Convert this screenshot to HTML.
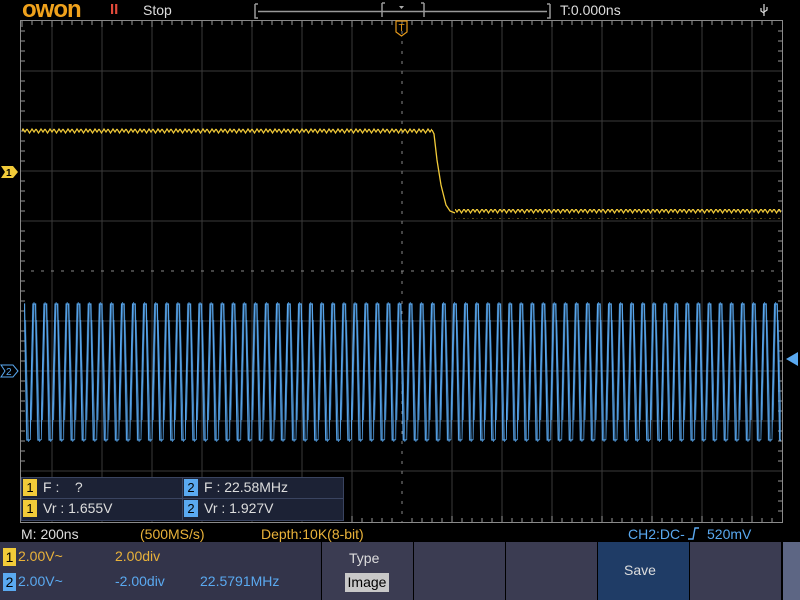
<!DOCTYPE html>
<html><head><meta charset="utf-8"><style>
body{margin:0;width:800px;height:600px;background:#000;overflow:hidden;position:relative;font-family:"Liberation Sans",sans-serif;}
.a{position:absolute;white-space:nowrap}
</style></head><body>
<svg class="a" style="left:0;top:0" width="800" height="600">
<defs>
<pattern id="sw" x="30" y="300" width="11.07" height="145" patternUnits="userSpaceOnUse">
<path d="M0,140 L3,4 L5.5,4 L8,140 L11.07,140" stroke="#5aa9f0" stroke-width="1.3" fill="none"/>
<path d="M1.5,120 L4,2 M6.5,20 L9.5,142" stroke="#4f98dc" stroke-width="0.8" fill="none"/>
</pattern>
<pattern id="yr" x="0" y="126" width="9" height="10" patternUnits="userSpaceOnUse">
<path d="M0,3 L2.5,7 L5,3 L7,6 L9,3" stroke="#f2cb39" stroke-width="1.2" fill="none"/>
</pattern>
</defs>
<rect x="20.5" y="20.5" width="762" height="502" fill="none" stroke="#8a8a8a"/>
<g stroke="#3a3a3a" stroke-width="1">
<path d="M52,21V522M102,21V522M152,21V522M202,21V522M252,21V522M302,21V522M352,21V522M452,21V522M502,21V522M552,21V522M602,21V522M652,21V522M702,21V522M752,21V522"/>
<path d="M21,71H782M21,121H782M21,171H782M21,221H782M21,321H782M21,371H782M21,421H782M21,471H782"/>
</g>
<path d="M21,271H782M402,21V522" stroke="#888" stroke-width="1" stroke-dasharray="3,7"/>
<g stroke="#999">
<path d="M22,21 v6 M32,21v4M42,21v4M52,21v6M62,21v4M72,21v4M82,21v4M92,21v4M102,21v6M112,21v4M122,21v4M132,21v4M142,21v4M152,21v6M162,21v4M172,21v4M182,21v4M192,21v4M202,21v6M212,21v4M222,21v4M232,21v4M242,21v4M252,21v6M262,21v4M272,21v4M282,21v4M292,21v4M302,21v6M312,21v4M322,21v4M332,21v4M342,21v4M352,21v6M362,21v4M372,21v4M382,21v4M392,21v4M412,21v4M422,21v4M432,21v4M442,21v4M452,21v6M462,21v4M472,21v4M482,21v4M492,21v4M502,21v6M512,21v4M522,21v4M532,21v4M542,21v4M552,21v6M562,21v4M572,21v4M582,21v4M592,21v4M602,21v6M612,21v4M622,21v4M632,21v4M642,21v4M652,21v6M662,21v4M672,21v4M682,21v4M692,21v4M702,21v6M712,21v4M722,21v4M732,21v4M742,21v4M752,21v6M762,21v4M772,21v4"/>
<path d="M352,522v-6M362,522v-4M372,522v-4M382,522v-4M392,522v-4M412,522v-4M422,522v-4M432,522v-4M442,522v-4M452,522v-6M462,522v-4M472,522v-4M482,522v-4M492,522v-4M502,522v-6M512,522v-4M522,522v-4M532,522v-4M542,522v-4M552,522v-6M562,522v-4M572,522v-4M582,522v-4M592,522v-4M602,522v-6M612,522v-4M622,522v-4M632,522v-4M642,522v-4M652,522v-6M662,522v-4M672,522v-4M682,522v-4M692,522v-4M702,522v-6M712,522v-4M722,522v-4M732,522v-4M742,522v-4M752,522v-6M762,522v-4M772,522v-4"/>
<path d="M21,31h4M21,41h4M21,51h4M21,61h4M21,81h4M21,91h4M21,101h4M21,111h4M21,131h4M21,141h4M21,151h4M21,161h4M21,181h4M21,191h4M21,201h4M21,211h4M21,231h4M21,241h4M21,251h4M21,261h4M21,281h4M21,291h4M21,301h4M21,311h4M21,331h4M21,341h4M21,351h4M21,361h4M21,381h4M21,391h4M21,401h4M21,411h4M21,431h4M21,441h4M21,451h4M21,461h4"/>
<path d="M782,31h-4M782,41h-4M782,51h-4M782,61h-4M782,81h-4M782,91h-4M782,101h-4M782,111h-4M782,131h-4M782,141h-4M782,151h-4M782,161h-4M782,181h-4M782,191h-4M782,201h-4M782,211h-4M782,231h-4M782,241h-4M782,251h-4M782,261h-4M782,281h-4M782,291h-4M782,301h-4M782,311h-4M782,331h-4M782,341h-4M782,351h-4M782,361h-4M782,381h-4M782,391h-4M782,401h-4M782,411h-4M782,431h-4M782,441h-4M782,451h-4M782,461h-4M782,481h-4M782,491h-4M782,501h-4M782,511h-4"/>
</g>
<rect x="24" y="297" width="757" height="148" fill="url(#sw)"/>
<rect x="22" y="126" width="410" height="10" fill="url(#yr)"/>
<path d="M432,130 L434,134 L437,160 L441,185 L446,205 L450,211 L455,213" stroke="#f2cb39" stroke-width="1.3" fill="none"/>
<rect x="455" y="209" width="326" height="10" fill="url(#yr)"/>
<path d="M255,4v14h3M255,4h3M550,4v14h-3M550,4h-3M258,11.5H547" stroke="#999" stroke-width="1.5" fill="none"/>
<path d="M382,3v14M424,3v14M382,3h3M424,3h-3" stroke="#999" stroke-width="1.5" fill="none"/>
<path d="M399,6h5l-2.5,3z" fill="#aaa"/>
<path d="M396,21h11v11l-5.5,4l-5.5,-4z" fill="none" stroke="#e79a1b" stroke-width="1.2"/>
<text x="401.5" y="31" fill="#e79a1b" font-size="10" text-anchor="middle" font-family="Liberation Sans">T</text>
<path d="M1,166h12l5,6l-5,6h-12l4,-6z" fill="#f2cb39"/>
<text x="6" y="176" font-size="10" font-weight="bold" fill="#000">1</text>
<path d="M1,365h12l5,6l-5,6h-12l4,-6z" fill="#000" stroke="#5aa9f0"/>
<text x="6" y="375" font-size="10" fill="#5aa9f0">2</text>
<path d="M798,352v14l-12,-7z" fill="#5aa9f0"/>
<path d="M764,4v12M761,8v3l3,2M767,7v3l-3,2" stroke="#ddd" stroke-width="1.2" fill="none"/>
<path d="M688,539h5l2,-11h4" stroke="#5aa9f0" stroke-width="1.4" fill="none"/>
</svg>
<div class="a" style="left:22px;top:-4px;font-size:24px;font-weight:bold;color:#f0a21c;letter-spacing:-1px">owon</div>
<div class="a" style="left:110px;top:1px;font-size:15px;color:#e24a3a;font-weight:bold">II</div>
<div class="a" style="left:143px;top:2px;font-size:14px;color:#ddd">Stop</div>
<div class="a" style="left:560px;top:2px;font-size:14px;color:#ddd">T:0.000ns</div>
<div class="a" style="left:21px;top:477px;width:321px;height:42px;background:#1c2235;border:1px solid #3a4460"></div>
<div class="a" style="left:182px;top:477px;width:1px;height:43px;background:#3a4460"></div>
<div class="a" style="left:21px;top:498px;width:322px;height:1px;background:#3a4460"></div>
<div class="a" style="left:23px;top:479px;width:14px;height:17px;background:#f2cb39;color:#000;font-size:13px;text-align:center;line-height:17px">1</div>
<div class="a" style="left:23px;top:500px;width:14px;height:17px;background:#f2cb39;color:#000;font-size:13px;text-align:center;line-height:17px">1</div>
<div class="a" style="left:184px;top:479px;width:14px;height:17px;background:#5aa9f0;color:#000;font-size:13px;text-align:center;line-height:17px">2</div>
<div class="a" style="left:184px;top:500px;width:14px;height:17px;background:#5aa9f0;color:#000;font-size:13px;text-align:center;line-height:17px">2</div>
<div class="a" style="left:43px;top:479px;font-size:14px;color:#ddd">F :&nbsp;&nbsp;&nbsp; ?</div>
<div class="a" style="left:43px;top:500px;font-size:14px;color:#ddd">Vr : 1.655V</div>
<div class="a" style="left:204px;top:479px;font-size:14px;color:#ddd">F : 22.58MHz</div>
<div class="a" style="left:204px;top:500px;font-size:14px;color:#ddd">Vr : 1.927V</div>
<div class="a" style="left:21px;top:526px;font-size:14px;color:#ddd">M: 200ns</div>
<div class="a" style="left:140px;top:526px;font-size:14px;color:#e9b23a">(500MS/s)</div>
<div class="a" style="left:261px;top:526px;font-size:14px;color:#e9b23a">Depth:10K(8-bit)</div>
<div class="a" style="left:628px;top:526px;font-size:14px;color:#5aa9f0">CH2:DC-</div>
<div class="a" style="left:707px;top:526px;font-size:14px;color:#5aa9f0">520mV</div>
<div class="a" style="left:0;top:542px;width:321px;height:58px;background:#33344a"></div>
<div class="a" style="left:322px;top:542px;width:91px;height:58px;background:#3b3c52"></div>
<div class="a" style="left:414px;top:542px;width:91px;height:58px;background:#3b3c52"></div>
<div class="a" style="left:506px;top:542px;width:91px;height:58px;background:#3b3c52"></div>
<div class="a" style="left:598px;top:542px;width:91px;height:58px;background:#1f3c66"></div>
<div class="a" style="left:690px;top:542px;width:91px;height:58px;background:#3b3c52"></div>
<div class="a" style="left:783px;top:542px;width:17px;height:58px;background:#5d6684"></div>
<div class="a" style="left:3px;top:548px;width:13px;height:18px;background:#f2cb39;color:#000;font-size:14px;text-align:center;line-height:18px">1</div>
<div class="a" style="left:3px;top:573px;width:13px;height:18px;background:#5aa9f0;color:#000;font-size:14px;text-align:center;line-height:18px">2</div>
<div class="a" style="left:18px;top:548px;font-size:14px;color:#e9b23a">2.00V~</div>
<div class="a" style="left:115px;top:548px;font-size:14px;color:#e9b23a">2.00div</div>
<div class="a" style="left:18px;top:573px;font-size:14px;color:#5aa9f0">2.00V~</div>
<div class="a" style="left:115px;top:573px;font-size:14px;color:#5aa9f0">-2.00div</div>
<div class="a" style="left:200px;top:573px;font-size:14px;color:#5aa9f0">22.5791MHz</div>
<div class="a" style="left:349px;top:550px;font-size:14px;color:#ddd">Type</div>
<div class="a" style="left:345px;top:573px;width:44px;height:19px;background:#c8c8c8;color:#000;font-size:14px;line-height:19px;text-align:center">Image</div>
<div class="a" style="left:624px;top:562px;font-size:14px;color:#ddd">Save</div>
</body></html>
